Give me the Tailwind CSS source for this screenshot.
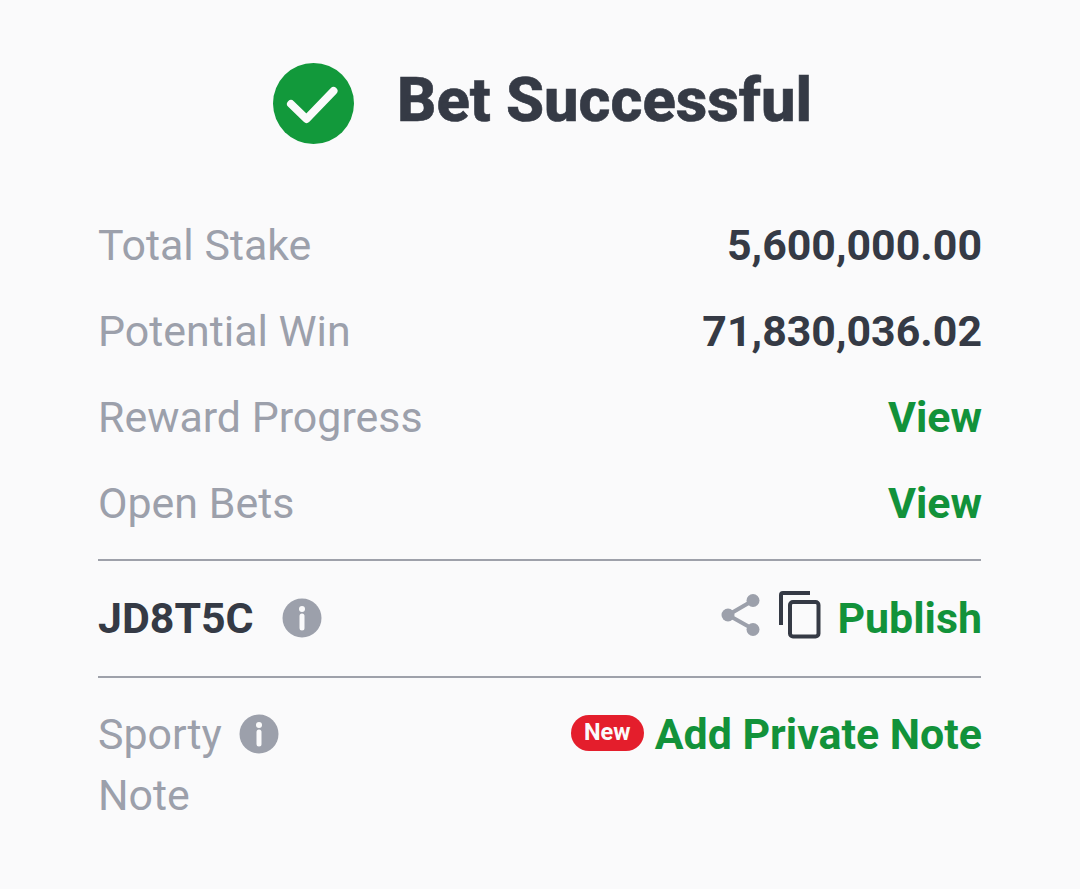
<!doctype html>
<html>
<head>
<meta charset="utf-8">
<script src="https://cdn.jsdelivr.net/npm/@tailwindcss/browser@4"></script>
</head>
<body class="m-0">
<div class="w-[1080px] h-[889px] bg-[#fafafb] font-['Roboto',sans-serif] overflow-hidden pl-[98px] pr-[99px] pt-[63px]">
  <div class="flex items-center gap-[43px] h-[81px] pl-[175px]">
    <svg class="w-[81px] h-[81px] shrink-0" viewBox="0 0 81 81"><circle cx="40.500" cy="40.500" r="40.500" fill="#12993b"/><path d="M18 41 L33.500 56 L60.500 28" fill="none" stroke="#fafafb" stroke-width="8" stroke-linecap="round" stroke-linejoin="round"/></svg>
    <span class="text-[61.400px] leading-[75px] mb-[6px] font-extrabold text-[#353a45] [-webkit-text-stroke:0.6px_#353a45] whitespace-nowrap">Bet Successful</span>
  </div>
  <div class="mt-[58px]">
    <div class="flex items-center justify-between h-[86px] -mr-px"><span class="text-[42.900px] text-[#9ca0ab]">Total Stake</span><span class="text-[42.900px] font-bold text-[#353a45]">5,600,000.00</span></div>
    <div class="flex items-center justify-between h-[86px] -mr-px"><span class="text-[42.900px] text-[#9ca0ab]">Potential Win</span><span class="text-[42.900px] font-bold text-[#353a45]">71,830,036.02</span></div>
    <div class="flex items-center justify-between h-[86px] -mr-px"><span class="text-[42.900px] text-[#9ca0ab]">Reward Progress</span><span class="text-[42.900px] font-bold text-[#12923a]">View</span></div>
    <div class="flex items-center justify-between h-[86px] -mr-px"><span class="text-[42.900px] text-[#9ca0ab]">Open Bets</span><span class="text-[42.900px] font-bold text-[#12923a]">View</span></div>
  </div>
  <div class="mt-[13px] border-t-2 border-[#9ea1aa] h-[117px] flex items-center justify-between">
    <div class="flex items-center gap-[28px]">
      <span class="text-[42.900px] font-bold text-[#353a45]">JD8T5C</span>
      <svg class="w-[40px] h-[40px]" viewBox="0 0 40 40"><circle cx="20" cy="20" r="19.500" fill="#9ca0ab"/><circle cx="20" cy="11" r="3" fill="#fafafb"/><path d="M20 18 V30" stroke="#fafafb" stroke-width="5" stroke-linecap="round"/></svg>
    </div>
    <div class="flex items-center -mr-px">
      <svg class="w-[39px] h-[44px] mr-[19px] mb-[7px]" viewBox="0 0 39 44"><path d="M32 7.500 L7 22 L32 36" fill="none" stroke="#9ca0ab" stroke-width="4"/><circle cx="32" cy="7.500" r="6.500" fill="#9ca0ab"/><circle cx="7" cy="22" r="6.500" fill="#9ca0ab"/><circle cx="32" cy="36.500" r="6.500" fill="#9ca0ab"/></svg>
      <svg class="w-[42px] h-[48px] mr-[16px] mb-[6px]" viewBox="0 0 42 48"><path d="M2 34 V4 a2 2 0 0 1 2 -2 H31" fill="none" stroke="#353a45" stroke-width="4"/><rect x="11" y="11" width="28.500" height="34.500" rx="3" fill="none" stroke="#353a45" stroke-width="4"/></svg>
      <span class="text-[42.900px] font-bold text-[#12923a]">Publish</span>
    </div>
  </div>
  <div class="border-t-2 border-[#9ea1aa] pt-[26px] flex items-start justify-between">
    <div class="w-[220px] text-[42.900px] leading-[61px] text-[#9ca0ab]">
      <span>Sporty</span><svg class="inline-block align-[-5px] ml-[17px] w-[40px] h-[40px]" viewBox="0 0 40 40"><circle cx="20" cy="20" r="19.500" fill="#9ca0ab"/><circle cx="20" cy="11" r="3" fill="#fafafb"/><path d="M20 18 V30" stroke="#fafafb" stroke-width="5" stroke-linecap="round"/></svg>
      <div>Note</div>
    </div>
    <div class="flex items-center h-[61px] gap-[11px] -mr-px">
      <span class="bg-[#e41e2c] text-[#fafafb] rounded-full h-[36px] w-[73px] mb-[3px] flex items-center justify-center text-[23.500px] font-bold">New</span>
      <span class="text-[42.900px] font-bold text-[#12923a]">Add Private Note</span>
    </div>
  </div>
</div>
</body>
</html>
